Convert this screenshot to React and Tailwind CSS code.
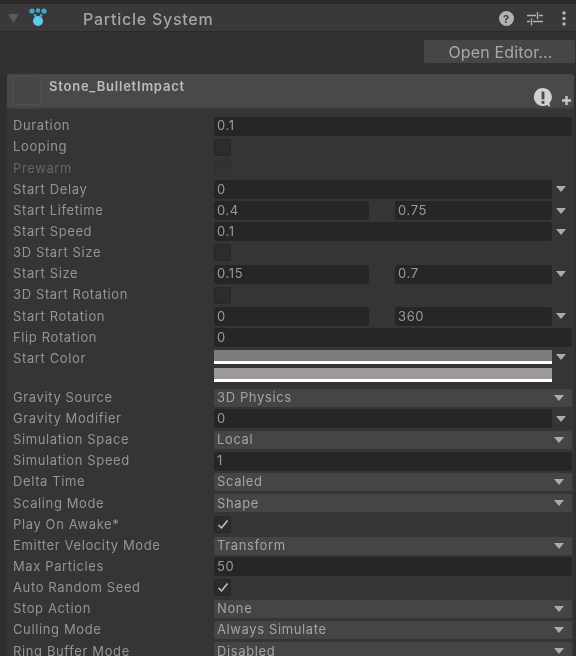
const Arrow = () => (
  <svg width="10" height="6" viewBox="0 0 10 6" className="shrink-0"><path d="M0 0h10L5 6z" fill="#adabad" /></svg>
);
const Field = ({ v, className = "flex-1" }) => (
  <div className={`h-[19px] rounded-[3px] bg-[#272527] pl-[3px] flex items-center text-[#9c9a9c] ${className}`}>{v}</div>
);
const Check = ({ on, dim }) => (
  <div className={`w-[17px] h-[17px] rounded-[2px] flex items-center justify-center border ${dim ? "bg-[#343234] border-[#302e30]" : "bg-[#2e2b2e] border-[#272527]"}`}>
    {on && <svg width="12" height="11" viewBox="0 0 12 11"><path d="M1.5 6l3 3 6-7.5" fill="none" stroke="#c8c7c8" strokeWidth="1.5" /></svg>}
  </div>
);
const Row = ({ label, dim, children }) => (
  <div className="h-[21.15px] flex items-center">
    <div className={`w-[201px] shrink-0 truncate ${dim ? "text-[#666466]" : "text-[#959395]"}`}>{label}</div>
    <div className="flex-1 flex items-center">{children}</div>
  </div>
);
const Full = ({ v }) => <Field v={v} />;
const ArrowCol = () => (
  <div className="w-[20px] flex justify-end pr-[6px]"><Arrow /></div>
);
const WithArrow = ({ v }) => (
  <>
    <Field v={v} />
    <ArrowCol />
  </>
);
const Two = ({ a, b }) => (
  <>
    <Field v={a} className="w-[155px]" />
    <div className="w-[26px]" />
    <Field v={b} className="w-[157px]" />
    <ArrowCol />
  </>
);
const Drop = ({ v }) => (
  <div className="flex-1 h-[18px] rounded-[2px] bg-[#464446] pl-[3px] pr-[8px] flex items-center justify-between text-[#a5a3a5]">
    {v}<Arrow />
  </div>
);
const ColorBar = ({ c }) => (
  <div className="h-[14px] flex flex-col">
    <div className="flex-1" style={{ background: c }} />
    <div className="h-[3px] bg-white" />
  </div>
);

export default function App() {
  return (
    <div className="w-[576px] h-[656px] overflow-hidden bg-[#302f30] blur-[0.4px] text-[13px] tracking-[0.62px] font-['Inter','Liberation_Sans',sans-serif]">
      <div className="h-[4px] bg-[#2a292a]" />
      <div className="h-[28px] bg-[#3a383a] border-b border-[#2b2a2b] flex items-center pl-[8px] pr-[10px] pt-[3px]">
        <svg width="11" height="9" viewBox="0 0 11 9" className="mt-[-1px]"><path d="M0 0h11L5.500 9z" fill="#5b595b" /></svg>
        <svg width="18" height="19" viewBox="0 0 18 19" className="ml-[10px] mt-[-4px]">
          <circle cx="3" cy="3" r="2.600" fill="#3fa8c6" />
          <circle cx="9" cy="2.500" r="2.300" fill="#3fa8c6" />
          <circle cx="15" cy="3" r="2.600" fill="#3fa8c6" />
          <circle cx="6" cy="7.500" r="1.400" fill="#3fa8c6" />
          <circle cx="12" cy="7.500" r="1.400" fill="#3fa8c6" />
          <circle cx="9" cy="13" r="5" fill="#62c8ec" />
        </svg>
        <div className="ml-[36px] text-[16px] font-medium text-[#a8a6a8] tracking-[0.75px]">Particle System</div>
        <div className="ml-auto flex items-center mt-[-2px]">
          <svg width="15" height="15" viewBox="0 0 15 15"><circle cx="7.500" cy="7.500" r="7.500" fill="#b3b1b3" /><text x="7.500" y="11.500" textAnchor="middle" fontSize="11" fontWeight="700" fill="#3a383a" fontFamily="Inter">?</text></svg>
          <svg width="16" height="15" viewBox="0 0 16 15" className="ml-[13px]"><path d="M0 4.500h9M12 4.500h4M10.500 1v7M0 10.500h3M6 10.500h10M4.500 7.500v7" stroke="#b3b1b3" strokeWidth="1.400" fill="none" /></svg>
          <svg width="4" height="15" viewBox="0 0 4 15" className="ml-[19px]"><circle cx="2" cy="2" r="1.800" fill="#b3b1b3" /><circle cx="2" cy="7.500" r="1.800" fill="#b3b1b3" /><circle cx="2" cy="13" r="1.800" fill="#b3b1b3" /></svg>
        </div>
      </div>
      <div className="h-[42px] bg-[#333233] flex items-start justify-end pt-[8px]">
        <div className="w-[151px] h-[23px] mr-[1px] bg-[#474647] rounded-[2px] flex items-center justify-center pl-[2px] text-[16px] text-[#a8a6a8] tracking-[0.15px]">Open Editor...</div>
      </div>
      <div className="ml-[7px] mr-[2px]">
        <div className="h-[35px] rounded-[3px] bg-[#4a484a] border-b-2 border-[#424042] flex items-start pl-[6px] pt-[2px] pr-[3px]">
          <div className="w-[28px] h-[29px] rounded-[3px] bg-[#464446] border border-[#504e50]" />
          <div className="ml-[8px] text-[13px] font-semibold text-[#bdbbbd] tracking-[0.78px] leading-[20px]">Stone_BulletImpact</div>
          <div className="ml-auto flex items-end h-[32px]">
            <svg width="20" height="20" viewBox="0 0 20 20"><path d="M10 0a9 9 0 1 0 4 17l3 2-.5-4A9 9 0 0 0 10 0z" fill="#d2d0d2" /><rect x="8.600" y="3.500" width="2.800" height="8" fill="#4a484a" /><rect x="8.600" y="13" width="2.800" height="2.800" fill="#4a484a" /></svg>
            <svg width="9" height="9" viewBox="0 0 9 9" className="ml-[9px] mb-[3px]"><path d="M3.300 0h2.400v3.300H9v2.400H5.700V9H3.300V5.700H0V3.300h3.300z" fill="#c8c6c8" /></svg>
          </div>
        </div>
        <div className="bg-[#363536] pl-[6px] pr-[2px] pt-[6.5px]">
          <Row label="Duration"><Full v="0.1" /></Row>
          <Row label="Looping"><Check /></Row>
          <Row label="Prewarm" dim><Check dim /></Row>
          <Row label="Start Delay"><WithArrow v="0" /></Row>
          <Row label="Start Lifetime"><Two a="0.4" b="0.75" /></Row>
          <Row label="Start Speed"><WithArrow v="0.1" /></Row>
          <Row label="3D Start Size"><Check /></Row>
          <Row label="Start Size"><Two a="0.15" b="0.7" /></Row>
          <Row label="3D Start Rotation"><Check /></Row>
          <Row label="Start Rotation"><Two a="0" b="360" /></Row>
          <Row label="Flip Rotation"><Full v="0" /></Row>
          <div className="h-[39px] flex items-start pt-[2px]">
            <div className="w-[201px] shrink-0 text-[#959395] leading-[17px]">Start Color</div>
            <div className="flex-1 flex flex-col gap-[4px]">
              <div className="flex items-center">
                <div className="flex-1"><ColorBar c="#7d7c7d" /></div>
                <ArrowCol />
              </div>
              <div className="flex">
                <div className="flex-1"><ColorBar c="#9c989c" /></div>
                <div className="w-[20px]" />
              </div>
            </div>
          </div>
          <Row label="Gravity Source"><Drop v="3D Physics" /></Row>
          <Row label="Gravity Modifier"><WithArrow v="0" /></Row>
          <Row label="Simulation Space"><Drop v="Local" /></Row>
          <Row label="Simulation Speed"><Full v="1" /></Row>
          <Row label="Delta Time"><Drop v="Scaled" /></Row>
          <Row label="Scaling Mode"><Drop v="Shape" /></Row>
          <Row label="Play On Awake*"><Check on /></Row>
          <Row label="Emitter Velocity Mode"><Drop v="Transform" /></Row>
          <Row label="Max Particles"><Full v="50" /></Row>
          <Row label="Auto Random Seed"><Check on /></Row>
          <Row label="Stop Action"><Drop v="None" /></Row>
          <Row label="Culling Mode"><Drop v="Always Simulate" /></Row>
          <Row label="Ring Buffer Mode"><Drop v="Disabled" /></Row>
        </div>
      </div>
    </div>
  );
}
